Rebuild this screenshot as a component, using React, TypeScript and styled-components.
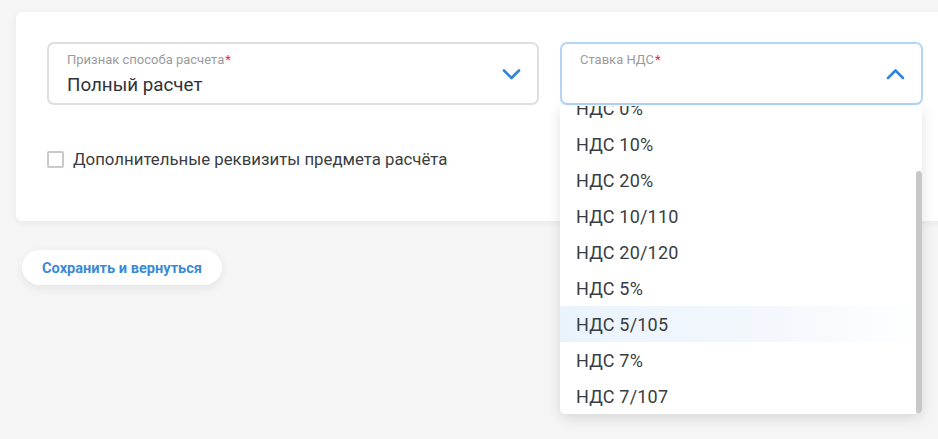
import React, { useEffect, useRef } from 'react';
import styled, { createGlobalStyle } from 'styled-components';

const GlobalStyle = createGlobalStyle`
  html, body {
    margin: 0;
    padding: 0;
    background: #f5f5f5;
    overflow: hidden;
  }
  body {
    font-family: Roboto, 'Liberation Sans', sans-serif;
    color: #333;
  }
`;

const Page = styled.div`
  padding: 12px 0 0 16px;
  width: 938px;
  height: 427px;
`;

const Card = styled.div`
  width: 938px;
  box-sizing: border-box;
  background: #fff;
  border-radius: 6px;
  box-shadow: 0 2px 8px rgba(0, 0, 0, 0.05);
  padding: 30px 31px 52px;
`;

const FieldsRow = styled.div`
  display: grid;
  grid-template-columns: 492px 363px;
  column-gap: 21px;
`;

const Field = styled.div<{ $open?: boolean }>`
  position: relative;
  height: 63px;
  box-sizing: border-box;
  border: 2px solid ${p => (p.$open ? '#b3d6f4' : '#dcdfe3')};
  border-radius: 7px;
  padding: 8px 40px 0 18px;
  background: #fff;
`;

const Label = styled.div`
  font-size: 13px;
  line-height: 16px;
  color: #9b9b9b;
`;

const Required = styled.span`
  color: #f0283c;
  margin-left: 1px;
`;

const Value = styled.div`
  font-size: 18.8px;
  line-height: 22px;
  margin-top: 6px;
  color: #2f3337;
`;

const Chevron = styled.svg`
  position: absolute;
  right: 16px;
  top: 50%;
  margin-top: -7px;
  width: 19px;
  height: 14px;
`;

const Dropdown = styled.div`
  position: absolute;
  left: -2px;
  right: -1px;
  top: calc(100% + 3px);
  height: 308px;
  background: #fff;
  border-radius: 0 0 5px 5px;
  box-shadow: 0 4px 14px rgba(0, 0, 0, 0.12);
  overflow: hidden;
  z-index: 10;
`;

const OptionList = styled.div`
  height: 100%;
  overflow-y: scroll;
  scrollbar-width: none;

  &::-webkit-scrollbar {
    display: none;
  }
`;

const ScrollThumb = styled.div`
  position: absolute;
  right: 0;
  bottom: 0;
  width: 6px;
  height: 243px;
  background: #c8c8c8;
  border-radius: 3px;
`;

const Option = styled.div<{ $active?: boolean }>`
  height: 36px;
  display: flex;
  align-items: center;
  padding-left: 16px;
  font-size: 18px;
  color: #383d43;
  letter-spacing: 0.2px;
  background: ${p =>
    p.$active ? 'linear-gradient(90deg, #eaf3fc 0%, #f4f8fd 60%, #ffffff 100%)' : 'transparent'};
`;

const CheckRow = styled.label`
  display: flex;
  align-items: center;
  gap: 9px;
  margin-top: 44px;
  font-size: 16.8px;
  color: #3a3d41;
`;

const Box = styled.span`
  width: 17px;
  height: 17px;
  box-sizing: border-box;
  border: 2px solid #c9c9c9;
  border-radius: 2px;
  background: #fff;
`;

const SaveButton = styled.button`
  margin: 29px 0 0 6px;
  height: 35px;
  padding: 0 20px;
  border: none;
  border-radius: 18px;
  background: #fff;
  box-shadow: 0 3px 10px rgba(0, 0, 0, 0.07);
  font-family: Roboto, 'Liberation Sans', sans-serif;
  font-size: 14.6px;
  font-weight: 700;
  color: #3a8ad8;
`;

const options = [
  'Без НДС',
  'НДС 18%',
  'НДС 0%',
  'НДС 10%',
  'НДС 20%',
  'НДС 10/110',
  'НДС 20/120',
  'НДС 5%',
  'НДС 5/105',
  'НДС 7%',
  'НДС 7/107',
];

function ChevronIcon({ up }: { up?: boolean }) {
  return (
    <Chevron viewBox="0 0 19 14">
      <path
        d={up ? 'M2 11 L9.5 3.5 L17 11' : 'M2 3.5 L9.5 11 L17 3.5'}
        fill="none"
        stroke="#2f86d8"
        strokeWidth="2.6"
        strokeLinecap="round"
        strokeLinejoin="round"
      />
    </Chevron>
  );
}

export default function App() {
  const listRef = useRef<HTMLDivElement>(null);

  // the open list is shown scrolled to its end
  useEffect(() => {
    if (listRef.current) listRef.current.scrollTop = 10000;
  }, []);

  return (
    <Page>
      <GlobalStyle />
      <Card>
        <FieldsRow>
          <Field>
            <Label>
              Признак способа расчета<Required>*</Required>
            </Label>
            <Value>Полный расчет</Value>
            <ChevronIcon />
          </Field>
          <Field $open>
            <Label>
              Ставка НДС<Required>*</Required>
            </Label>
            <ChevronIcon up />
            <Dropdown>
              <OptionList ref={listRef}>
                {options.map(o => (
                  <Option key={o} $active={o === 'НДС 5/105'}>
                    {o}
                  </Option>
                ))}
              </OptionList>
              <ScrollThumb />
            </Dropdown>
          </Field>
        </FieldsRow>
        <CheckRow>
          <Box />
          Дополнительные реквизиты предмета расчёта
        </CheckRow>
      </Card>
      <SaveButton>Сохранить и вернуться</SaveButton>
    </Page>
  );
}
